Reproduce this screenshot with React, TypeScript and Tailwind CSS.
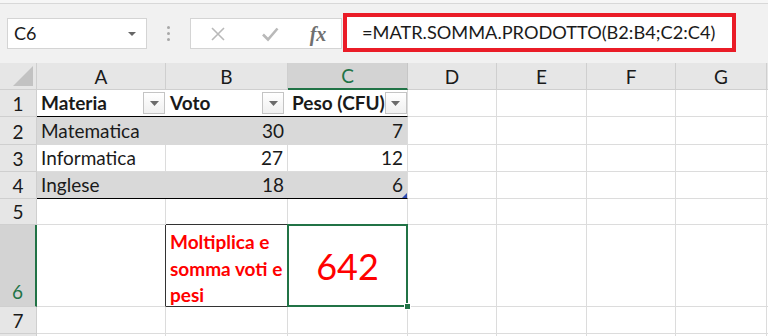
import React from "react";

const cols = ["A", "B", "C", "D", "E", "F", "G"];

function FilterBtn() {
  return (
    <div className="w-[22px] h-[22px] shrink-0 border border-[#c4c4c4] bg-gradient-to-b from-white to-[#f0f0f0] flex items-center justify-center">
      <svg width="9" height="5" viewBox="0 0 9 5">
        <path d="M0 0h9L4.5 5z" fill="#6b6b6b" />
      </svg>
    </div>
  );
}

const rows = [
  { n: 1, a: "Materia", b: "Voto", c: "Peso (CFU)", head: true },
  { n: 2, a: "Matematica", b: "30", c: "7", grey: true },
  { n: 3, a: "Informatica", b: "27", c: "12" },
  { n: 4, a: "Inglese", b: "18", c: "6", grey: true, last: true },
];

export default function App() {
  return (
    <div className="w-[768px] h-[336px] overflow-hidden bg-white font-['Lato',sans-serif] text-[#1a1a1a]">
      {/* toolbar */}
      <div className="h-[63px] bg-[#f1f1f1] flex flex-col">
        <div className="h-[4px] border-b border-[#d8d8d8] bg-[#f6f6f6]" />
        <div className="flex items-start">
          <div className="ml-[7px] mt-[14px] w-[140px] h-[31px] bg-white border border-[#d4d4d4] flex items-center justify-between pl-[6px] pr-[10px] text-[18px]">
            <span>C6</span>
            <svg width="8" height="4" viewBox="0 0 8 4">
              <path d="M0 0h8L4 4z" fill="#666" />
            </svg>
          </div>
          <div className="w-[43px] mt-[14px] h-[31px] flex flex-col items-center justify-center gap-[3px]">
            <div className="w-[3px] h-[3px] rounded-full bg-[#a8a8a8]" />
            <div className="w-[3px] h-[3px] rounded-full bg-[#a8a8a8]" />
            <div className="w-[3px] h-[3px] rounded-full bg-[#a8a8a8]" />
          </div>
          <div className="mt-[14px] w-[152px] h-[31px] bg-white border border-[#d4d4d4] flex items-center">
            <div className="w-[54px] flex justify-center">
              <svg width="16" height="16" viewBox="0 0 16 16">
                <path d="M2 2l12 12M14 2L2 14" stroke="#b9b9b9" strokeWidth="1.6" />
              </svg>
            </div>
            <div className="w-[50px] flex justify-center">
              <svg width="18" height="16" viewBox="0 0 18 16">
                <path d="M2 8.5l5 5L16.5 2.5" stroke="#b9b9b9" strokeWidth="2.6" fill="none" />
              </svg>
            </div>
            <div className="w-[46px] flex justify-center font-['Liberation_Serif',serif] italic font-bold text-[20px] text-[#707070] leading-none">
              fx
            </div>
          </div>
          <div className="ml-[1px] mt-[9px] w-[393px] h-[39px] bg-white border-[4px] border-[#ea1c27] flex items-center pl-[15px] text-[18.2px] text-[#1a1a1a] whitespace-nowrap">
            =MATR.SOMMA.PRODOTTO(B2:B4;C2:C4)
          </div>
        </div>
      </div>

      {/* sheet */}
      <div className="grid grid-cols-[37px_129px_122px_120px_89px_90px_89px_91px_1fr] grid-rows-[27px_27px_28px_27px_27px_26px_82px_27px_27px] text-[19px]">
        {/* column headers */}
        <div className="bg-[#e6e6e6] border-r border-b border-[#cfcfcf] flex items-end justify-end p-[3px]">
          <svg width="20" height="20" viewBox="0 0 20 20">
            <path d="M20 0V20H0z" fill="#c2c2c2" />
          </svg>
        </div>
        {cols.map((c) => (
          <div
            key={c}
            className={
              c === "C"
                ? "bg-[#d3d3d3] border-r border-[#c6c6c6] border-b-2 border-b-[#217346] text-[#217346] flex items-end justify-center leading-[24px]"
                : "bg-[#e6e6e6] border-r border-b border-[#cfcfcf] flex items-end justify-center leading-[24px]"
            }
          >
            {c}
          </div>
        ))}
        <div className="bg-[#e6e6e6] border-b border-[#cfcfcf]" />

        {/* rows 1-4 */}
        {rows.map((r) => (
          <React.Fragment key={r.n}>
            <div className="bg-[#e6e6e6] border-r border-b border-[#cfcfcf] flex items-end justify-center leading-[24px]">
              {r.n}
            </div>
            <div
              className={`flex items-center justify-between pl-[4px] pr-[1px] ${r.grey ? "bg-[#d9d9d9]" : "border-r border-[#dcdcdc]"} ${r.head || r.last ? "border-b border-b-black" : r.grey ? "" : "border-b border-b-[#dcdcdc]"} ${r.head ? "font-bold bg-white border-r-0" : ""}`}
            >
              <span>{r.a}</span>
              {r.head && <FilterBtn />}
            </div>
            <div
              className={`flex items-center pr-[4px] ${r.head ? "justify-between pl-[4px] pr-[1px] font-bold" : "justify-end"} ${r.grey ? "bg-[#d9d9d9]" : "border-r border-[#dcdcdc]"} ${r.head || r.last ? "border-b border-b-black" : r.grey ? "" : "border-b border-b-[#dcdcdc]"} ${r.head ? "border-r-0" : ""}`}
            >
              {r.head && <span>{r.b}</span>}
              {r.head ? <FilterBtn /> : r.b}
            </div>
            <div
              className={`relative flex items-center pr-[4px] border-r border-[#dcdcdc] ${r.head ? "justify-between pl-[4px] pr-[1px] font-bold" : "justify-end"} ${r.grey ? "bg-[#d9d9d9]" : ""} ${r.head || r.last ? "border-b border-b-black" : r.grey ? "" : "border-b border-b-[#dcdcdc]"}`}
            >
              {r.head && <span className="whitespace-nowrap">{r.c}</span>}
              {r.head ? <FilterBtn /> : r.c}
              {r.last && (
                <svg className="absolute right-0 bottom-0" width="5" height="5" viewBox="0 0 5 5">
                  <path d="M5 0V5H0z" fill="#2e4bb0" />
                </svg>
              )}
            </div>
            {[0, 1, 2, 3].map((i) => (
              <div key={i} className="border-r border-b border-[#dcdcdc]" />
            ))}
            <div className="border-b border-[#dcdcdc]" />
          </React.Fragment>
        ))}

        {/* row 5 */}
        <div className="bg-[#e6e6e6] border-r border-b border-[#cfcfcf] flex items-end justify-center leading-[24px]">5</div>
        <div className="border-r border-b border-[#dcdcdc]" />
        <div className="border-r border-b border-[#dcdcdc] border-b-[#333]" />
        {[0, 1, 2, 3, 4].map((i) => (
          <div key={i} className="border-r border-b border-[#dcdcdc]" />
        ))}
        <div className="border-b border-[#dcdcdc]" />

        {/* row 6 */}
        <div className="bg-[#d3d3d3] border-r-2 border-r-[#217346] border-b border-[#cfcfcf] text-[#217346] flex items-end justify-center leading-[24px] pb-[2px]">
          6
        </div>
        <div className="border-r border-b border-[#dcdcdc] border-r-[#333]" />
        <div className="border-r border-b border-[#333] pl-[4px] pt-[4px] text-[#ff0000] font-bold leading-[26.5px]">
          Moltiplica e somma voti e pesi
        </div>
        <div className="relative border-r border-b border-[#dcdcdc] flex items-center justify-center text-[36px] text-[#ff0000]">
          <div className="absolute -left-[1px] -top-[1px] -right-[1px] -bottom-[1px] border-2 border-[#217346]" />
          <div className="absolute -right-[4px] -bottom-[4px] w-[7px] h-[7px] bg-[#217346] border border-white" />
          642
        </div>
        {[0, 1, 2, 3].map((i) => (
          <div key={i} className="border-r border-b border-[#dcdcdc]" />
        ))}
        <div className="border-b border-[#dcdcdc]" />

        {/* rows 7-8 */}
        {[7, 8].map((n) => (
          <React.Fragment key={n}>
            <div className="bg-[#e6e6e6] border-r border-b border-[#cfcfcf] flex items-end justify-center leading-[24px]">
              {n === 7 ? n : ""}
            </div>
            {[0, 1, 2, 3, 4, 5, 6].map((i) => (
              <div key={i} className="border-r border-b border-[#dcdcdc]" />
            ))}
            <div className="border-b border-[#dcdcdc]" />
          </React.Fragment>
        ))}
      </div>
    </div>
  );
}
